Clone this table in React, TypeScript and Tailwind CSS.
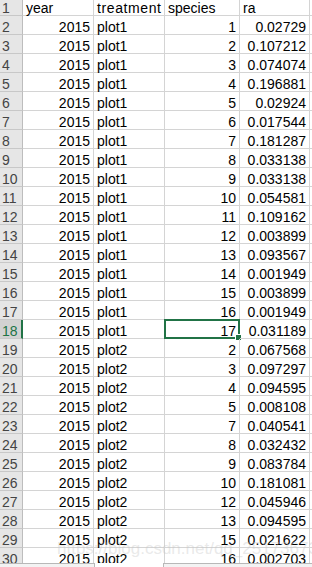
import React from 'react';

type Row = { year: string; treatment: string; species: string; ra: string };

const header: Row = { year: 'year', treatment: 'treatment', species: 'species', ra: 'ra' };

const rows: Row[] = [
    ['plot1', '1', '0.02729'],
    ['plot1', '2', '0.107212'],
    ['plot1', '3', '0.074074'],
    ['plot1', '4', '0.196881'],
    ['plot1', '5', '0.02924'],
    ['plot1', '6', '0.017544'],
    ['plot1', '7', '0.181287'],
    ['plot1', '8', '0.033138'],
    ['plot1', '9', '0.033138'],
    ['plot1', '10', '0.054581'],
    ['plot1', '11', '0.109162'],
    ['plot1', '12', '0.003899'],
    ['plot1', '13', '0.093567'],
    ['plot1', '14', '0.001949'],
    ['plot1', '15', '0.003899'],
    ['plot1', '16', '0.001949'],
    ['plot1', '17', '0.031189'],
    ['plot2', '2', '0.067568'],
    ['plot2', '3', '0.097297'],
    ['plot2', '4', '0.094595'],
    ['plot2', '5', '0.008108'],
    ['plot2', '7', '0.040541'],
    ['plot2', '8', '0.032432'],
    ['plot2', '9', '0.083784'],
    ['plot2', '10', '0.181081'],
    ['plot2', '12', '0.045946'],
    ['plot2', '13', '0.094595'],
    ['plot2', '15', '0.021622'],
    ['plot2', '16', '0.002703'],
].map(([treatment, species, ra]) => ({ year: '2015', treatment, species, ra }));

const SELECTED_ROW = 18;

function Cell({ children, width, right, selected, wide }: { children: React.ReactNode; width: string; right?: boolean; selected?: boolean; wide?: boolean }) {
    return (
        <div
            className={`relative flex items-end h-full shrink-0 border-r border-b border-[#d4d4d4] px-[3px] leading-[14px] whitespace-nowrap overflow-visible ${width} ${right ? 'justify-end' : 'justify-start'}`}
        >
            <span className={wide ? 'tracking-[0.6px]' : ''}>{children}</span>
            {selected && (
                <>
                    {/* selection border + fill handle */}
                    <div className="absolute -left-px -top-px -right-px -bottom-px border-2 border-[#217346] pointer-events-none" />
                    <div className="absolute -right-[3px] -bottom-[3px] w-[5px] h-[5px] bg-[#217346] border border-white box-content" />
                </>
            )}
        </div>
    );
}

export default function App() {
    const all = [header, ...rows];

    return (
        <div className="w-[312px] h-[567px] bg-white overflow-hidden flex flex-col text-[14px] text-black" style={{ fontFamily: '"Liberation Sans", Arial, sans-serif' }}>
            {/* Grid */}
            <div className="relative h-[563px] overflow-hidden shrink-0">
                <div className="flex flex-col -mt-[3px]">
                    {all.map((r, i) => {
                        const n = i + 1;
                        const isSel = n === SELECTED_ROW;
                        const isHeader = i === 0;
                        return (
                            <div key={n} className="flex h-[19px]">
                                {/* Row number */}
                                <div
                                    className={`flex items-end w-[23px] shrink-0 h-full pl-[2px] leading-[14px] border-b border-[#c8c8c8] ${
                                        isSel
                                            ? 'bg-[#d2d2d2] text-[#217346] border-r-2 border-r-[#217346]'
                                            : 'bg-[#e6e6e6] text-[#444] border-r border-r-[#bdbdbd]'
                                    }`}
                                >
                                    {n}
                                </div>
                                <Cell width="w-[71px]" right={!isHeader}>{r.year}</Cell>
                                <Cell width="w-[71px]" wide={isHeader}>{r.treatment}</Cell>
                                <Cell width="w-[75px]" right={!isHeader} selected={isSel}>{r.species}</Cell>
                                <Cell width="w-[70px]" right={!isHeader}>{r.ra}</Cell>
                                <div className="flex-1 h-full border-b border-[#d4d4d4]" />
                            </div>
                        );
                    })}
                </div>

                {/* Watermark */}
                <div className="absolute left-[57px] top-[539px] text-[17px] leading-[20px] text-[#c8c8c8]/40 whitespace-nowrap pointer-events-none">
                    https://blog.csdn.net/qq_25173673
                </div>
            </div>

            {/* Sheet tab strip */}
            <div className="flex h-[4px] shrink-0">
                <div className="w-[95px] border-t border-r border-[#b8b8b8] bg-[#f3f3f3]" />
                <div className="w-[68px] bg-white" />
                <div className="flex-1 border-t border-l border-[#b8b8b8] bg-[#f3f3f3]" />
            </div>
        </div>
    );
}
